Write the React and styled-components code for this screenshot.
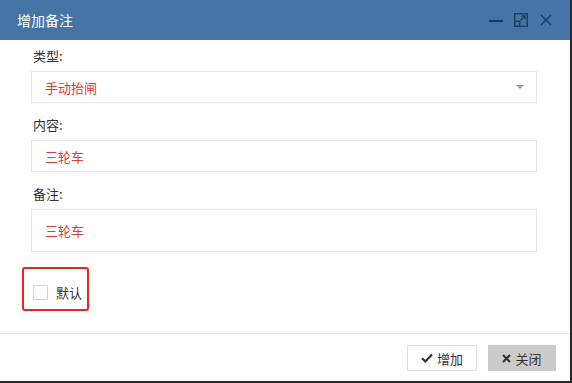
import React from "react";
import styled, { createGlobalStyle } from "styled-components";

const GlobalStyle = createGlobalStyle`
  body {
    margin: 0;
    background: #262626;
    font-family: "Noto Sans CJK SC", "Noto Sans", sans-serif;
  }
`;

const Dialog = styled.div`
  width: 570px;
  height: 381px;
  background: #fff;
  display: flex;
  flex-direction: column;
`;

const Header = styled.div`
  height: 40px;
  flex: none;
  background: #4475a6;
  display: flex;
  align-items: center;
  justify-content: space-between;
  padding: 0 17px 0 17px;
  box-sizing: border-box;
`;

const Title = styled.span`
  color: #fff;
  font-size: 14px;
`;

const Tools = styled.div`
  display: flex;
  align-items: center;
  gap: 10px;
`;

const ToolButton = styled.span`
  width: 15px;
  height: 15px;
  display: flex;
  align-items: center;
  justify-content: center;
  color: #1d3a5c;
`;

const Body = styled.div`
  flex: 1;
  padding: 7px 33px 0 31px;
  display: flex;
  flex-direction: column;
`;

const Label = styled.div`
  font-size: 13px;
  line-height: 17px;
  color: #333;
  margin-bottom: 7px;
  padding-left: 2px;
`;

const Field = styled.div`
  margin-bottom: 13px;
`;

const Box = styled.div`
  height: ${(p) => p.$height || 32}px;
  border: 1px solid #e6e6e6;
  box-sizing: border-box;
  padding: 0 13px;
  display: flex;
  align-items: center;
  justify-content: space-between;
  color: #e23a37;
  font-size: 13px;
`;

const Caret = styled.span`
  width: 0;
  height: 0;
  border-left: 4px solid transparent;
  border-right: 4px solid transparent;
  border-top: 4px solid #999;
  margin-right: -1px;
`;

const Highlight = styled.label`
  margin: 2px 0 0 -9px;
  width: 67px;
  height: 44px;
  box-sizing: border-box;
  border: 2px solid #e3291f;
  border-radius: 3px;
  display: flex;
  align-items: center;
  padding: 6px 0 0 9px;
  gap: 8px;
  font-size: 13px;
  color: #333;
`;

const Check = styled.span`
  width: 15px;
  height: 15px;
  border: 1px solid #d4d4d4;
  box-sizing: border-box;
  border-radius: 1px;
`;

const Footer = styled.div`
  height: 48px;
  flex: none;
  box-sizing: border-box;
  border-top: 1px solid #e8e8e8;
  display: flex;
  justify-content: flex-end;
  align-items: flex-start;
  padding: 11px 14px 0 0;
  gap: 11px;
`;

const Button = styled.button`
  width: ${(p) => p.$width}px;
  height: 26px;
  border: 1px solid ${(p) => (p.$muted ? "#c9c9c9" : "#dedede")};
  background: ${(p) => (p.$muted ? "#cbcbcb" : "#fff")};
  color: #333;
  font-family: inherit;
  font-size: 13px;
  display: flex;
  align-items: center;
  justify-content: center;
  gap: 4px;
  padding: 0;
`;

export default function App() {
  return (
    <>
      <GlobalStyle />
      <Dialog>
        <Header>
          <Title>增加备注</Title>
          <Tools>
            <ToolButton>
              <svg width="14" height="14" viewBox="0 0 14 14">
                <rect x="0" y="7" width="14" height="2" fill="currentColor" />
              </svg>
            </ToolButton>
            <ToolButton>
              <svg width="14" height="14" viewBox="0 0 14 14" fill="none" stroke="currentColor" strokeWidth="1.3">
                <rect x="0.7" y="0.7" width="12.6" height="12.6" />
                <rect x="0.7" y="8.3" width="5" height="5" />
                <path d="M6.5 7.5 L11 3 M7.5 3 H11 V6.5" />
              </svg>
            </ToolButton>
            <ToolButton>
              <svg width="12" height="12" viewBox="0 0 12 12" stroke="currentColor" strokeWidth="1.4">
                <path d="M1 1 L11 11 M11 1 L1 11" />
              </svg>
            </ToolButton>
          </Tools>
        </Header>
        <Body>
          <Field>
            <Label>类型:</Label>
            <Box>
              手动抬闸
              <Caret />
            </Box>
          </Field>
          <Field>
            <Label>内容:</Label>
            <Box>三轮车</Box>
          </Field>
          <Field>
            <Label>备注:</Label>
            <Box $height={43}>三轮车</Box>
          </Field>
          <Highlight>
            <Check />
            默认
          </Highlight>
        </Body>
        <Footer>
          <Button $width={70}>
            <svg width="12" height="10" viewBox="0 0 12 10">
              <path d="M1 5.2 L4.3 8.4 L11 1.6" fill="none" stroke="#333" strokeWidth="2.2" />
            </svg>
            增加
          </Button>
          <Button $width={68} $muted>
            <svg width="9" height="9" viewBox="0 0 9 9">
              <path d="M1 1 L8 8 M8 1 L1 8" stroke="#333" strokeWidth="2.2" />
            </svg>
            关闭
          </Button>
        </Footer>
      </Dialog>
    </>
  );
}
